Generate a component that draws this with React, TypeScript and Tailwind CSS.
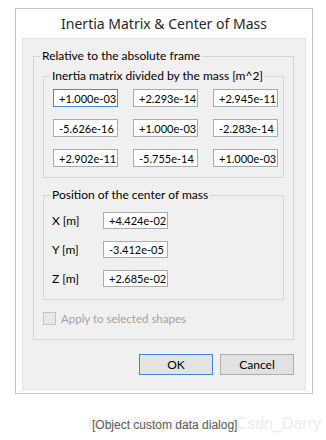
const matrix = [
  ["+1.000e-03", "+2.293e-14", "+2.945e-11"],
  ["-5.626e-16", "+1.000e-03", "-2.283e-14"],
  ["+2.902e-11", "-5.755e-14", "+1.000e-03"],
];

const position = [
  ["X [m]", "+4.424e-02"],
  ["Y [m]", "-3.412e-05"],
  ["Z [m]", "+2.685e-02"],
];

const TextBox = ({ value, focused, height }: { value: string; focused?: boolean; height: string }) => (
  <div
    className={`${height} w-[65px] flex items-center bg-white pl-[5px] border ${
      focused ? "border-[#3d8ee0]" : "border-[#a9abb2]"
    }`}
  >
    <span className="text-[11px] leading-none text-black whitespace-nowrap">{value}</span>
    {focused && <span className="ml-[1px] h-[13px] w-px bg-black" />}
  </div>
);

const App = () => {
  return (
    <div className="relative w-[326px] h-[440px] bg-white pt-[8px] pl-[15px] font-['Lato',sans-serif]">
      <div className="w-[298px] h-[386px] border border-[#c6c6c6] bg-white px-[6px]">
        <div className="h-[29px] flex items-center justify-center font-['Noto_Sans',sans-serif] text-[14px] text-[#262626]">
          Inertia Matrix &amp; Center of Mass
        </div>

        <div className="h-[352px] bg-[#f0f0f0] border border-[#e2e2e2] pl-[10px] pt-[9px]">
          <fieldset className="w-[261px] border border-[#d6d6d6] px-[9px] pb-[14px]">
            <legend className="-ml-[3px] px-[2px] text-[12px] leading-[16px] text-black whitespace-nowrap">
              Relative to the absolute frame
            </legend>

            <fieldset className="mt-[4px] w-[241px] border border-[#d6d6d6] pl-[9px] pt-[5px] pb-[10px]">
              <legend className="-ml-[3px] px-[2px] text-[12px] leading-[16px] text-black whitespace-nowrap">
                Inertia matrix divided by the mass [m^2]
              </legend>
              <div className="grid grid-cols-[65px_65px_65px] gap-x-[15px] gap-y-[12px]">
                {matrix.flat().map((v, i) => (
                  <TextBox key={i} value={v} focused={i === 0} height="h-[18px]" />
                ))}
              </div>
            </fieldset>

            <fieldset className="mt-[9px] w-[241px] border border-[#d6d6d6] pl-[8px] pt-[9px] pb-[12px]">
              <legend className="-ml-[2px] px-[2px] text-[12px] leading-[16px] text-black whitespace-nowrap">
                Position of the center of mass
              </legend>
              <div className="flex flex-col gap-[12px]">
                {position.map(([label, v]) => (
                  <div key={label} className="flex items-center">
                    <span className="w-[51px] text-[12px] leading-none text-black">{label}</span>
                    <TextBox value={v} height="h-[17px]" />
                  </div>
                ))}
              </div>
            </fieldset>

            <div className="mt-[12px] flex items-center gap-[5px]">
              <div className="w-[13px] h-[13px] border border-[#c4c4c4] bg-[#e8e8e8]" />
              <span className="text-[11.5px] leading-none text-[#a3a3a3]">Apply to selected shapes</span>
            </div>
          </fieldset>

          <div className="mt-[14px] w-[261px] flex justify-end gap-[7px]">
            <button className="w-[74px] h-[21px] border border-[#3c86d9] bg-[#e3e3e3] text-[12px] leading-none text-black">
              OK
            </button>
            <button className="w-[74px] h-[21px] border border-[#adadad] bg-[#e1e1e1] text-[12px] leading-none text-black">
              Cancel
            </button>
          </div>
        </div>
      </div>

      <div className="relative mt-[20px] h-[20px] leading-[20px] font-['Liberation_Sans',sans-serif]">
        <span className="absolute left-[73px] top-0 text-[16px] text-[#ececec] whitespace-nowrap">
          https://blog.csdn.net/Csdn_Darry
        </span>
        <span className="absolute left-[77px] top-[1px] text-[12px] text-[#5a5a5a] whitespace-nowrap">
          [Object custom data dialog]
        </span>
      </div>
    </div>
  );
};

export default App;
